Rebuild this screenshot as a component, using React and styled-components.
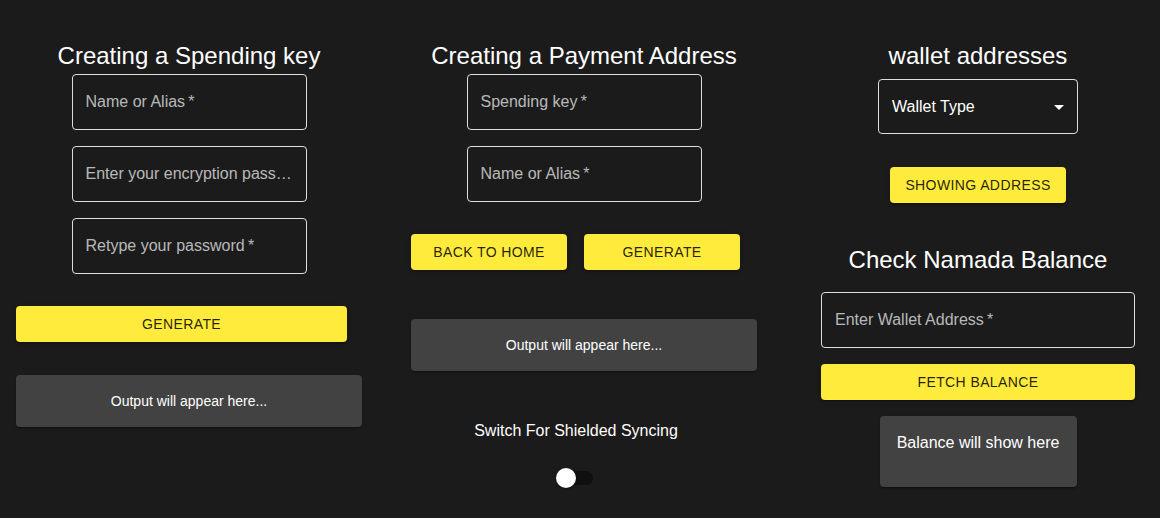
import * as React from 'react';
import styled, { createGlobalStyle } from 'styled-components';

const GlobalStyle = createGlobalStyle`
    html, body {
        margin: 0;
        padding: 0;
        background: #1b1b1b;
        font-family: "Liberation Sans", Arial, sans-serif;
        color: #fff;
    }
    * { box-sizing: border-box; }
`;

const Page = styled.div`
    display: flex;
    align-items: flex-start;
    width: 1160px;
    height: 518px;
    padding: 42px 0 0 16px;
    overflow: hidden;
`;

const Column = styled.div`
    display: flex;
    flex-direction: column;
    align-items: center;
    width: ${props => props.width}px;
    margin-left: ${props => props.gap || 0}px;
`;

const Title = styled.h2`
    margin: ${props => props.top || 0}px 0 0;
    font-size: 24px;
    font-weight: normal;
    line-height: 28px;
    white-space: nowrap;
    color: #fff;
`;

const Field = styled.div`
    display: flex;
    align-items: center;
    width: ${props => props.width || 235}px;
    height: 56px;
    margin-top: ${props => props.top || 0}px;
    padding: 0 13px;
    border: 1px solid rgba(255, 255, 255, 0.85);
    border-radius: 4px;
    font-size: 16px;
    color: rgba(255, 255, 255, 0.7);
    white-space: nowrap;
    overflow: hidden;
`;

const FieldText = styled.span`
    overflow: hidden;
    text-overflow: ellipsis;
`;

const SelectBox = styled(Field)`
    justify-content: space-between;
    height: 55px;
    padding-right: 6px;
    color: #fff;
`;

const Button = styled.button`
    display: block;
    width: ${props => props.width}px;
    height: 36px;
    margin-top: ${props => props.top || 0}px;
    padding: 0 8px;
    border: none;
    border-radius: 4px;
    background: #ffeb3b;
    color: rgba(0, 0, 0, 0.87);
    font-family: "Liberation Sans", Arial, sans-serif;
    font-size: 14px;
    letter-spacing: 0.4px;
    text-transform: uppercase;
    white-space: nowrap;
    box-shadow: 0 3px 1px -2px rgba(0,0,0,0.2), 0 2px 2px 0 rgba(0,0,0,0.14), 0 1px 5px 0 rgba(0,0,0,0.12);
    align-self: ${props => props.align || 'center'};
    cursor: pointer;
`;

const ButtonRow = styled.div`
    display: flex;
    gap: 17px;
    width: 100%;
    margin-top: 32px;
`;

const Output = styled.div`
    width: ${props => props.width ? props.width + 'px' : '100%'};
    margin-top: ${props => props.top || 0}px;
    padding: 16px 16px;
    background: #424242;
    border-radius: 4px;
    font-size: 14px;
    line-height: 20px;
    text-align: center;
    color: #fff;
    box-shadow: 0 2px 1px -1px rgba(0,0,0,0.2), 0 1px 1px 0 rgba(0,0,0,0.14), 0 1px 3px 0 rgba(0,0,0,0.12);
`;

const BalanceBox = styled(Output)`
    height: 71px;
    padding: 16px;
    font-size: 16px;
    line-height: 22px;
`;

const SwitchLabel = styled.div`
    margin: 48px 16px 0 0;
    font-size: 16px;
    line-height: 24px;
    color: #fff;
`;

const SwitchRoot = styled.span`
    position: relative;
    display: inline-flex;
    width: 58px;
    height: 38px;
    margin: 16px 17px 0 0;
    padding: 12px;
`;

const SwitchTrack = styled.span`
    width: 100%;
    height: 100%;
    border-radius: 7px;
    background: #0d0d0d;
    opacity: 0.8;
`;

const SwitchThumb = styled.span`
    position: absolute;
    top: 9px;
    left: 9px;
    width: 20px;
    height: 20px;
    border-radius: 50%;
    background: #fff;
    box-shadow: 0 2px 1px -1px rgba(0,0,0,0.2), 0 1px 1px 0 rgba(0,0,0,0.14), 0 1px 3px 0 rgba(0,0,0,0.12);
`;

function ArrowDrop()
{
    return (
        <svg width="24" height="24" viewBox="0 0 24 24" fill="#fff">
            <path d="M7 10l5 5 5-5z" />
        </svg>
    );
}

const REQ = '\u2009*';

export default function App()
{
    return (
        <Page>
            <GlobalStyle />

            <Column width={346}>
                <Title>Creating a Spending key</Title>
                <Field top={4}><FieldText>Name or Alias{REQ}</FieldText></Field>
                <Field top={16}><FieldText>Enter your encryption password{REQ}</FieldText></Field>
                <Field top={16}><FieldText>Retype your password{REQ}</FieldText></Field>
                <Button width={331} top={32} align="flex-start">Generate</Button>
                <Output top={33}>Output will appear here...</Output>
            </Column>

            <Column width={346} gap={49}>
                <Title>Creating a Payment Address</Title>
                <Field top={4}><FieldText>Spending key{REQ}</FieldText></Field>
                <Field top={16}><FieldText>Name or Alias{REQ}</FieldText></Field>
                <ButtonRow>
                    <Button width={156}>Back to home</Button>
                    <Button width={156}>Generate</Button>
                </ButtonRow>
                <Output top={49}>Output will appear here...</Output>
                <SwitchLabel>Switch For Shielded Syncing</SwitchLabel>
                <SwitchRoot>
                    <SwitchTrack />
                    <SwitchThumb />
                </SwitchRoot>
            </Column>

            <Column width={314} gap={64}>
                <Title>wallet addresses</Title>
                <SelectBox width={200} top={9}>
                    <span>Wallet Type</span>
                    <ArrowDrop />
                </SelectBox>
                <Button width={176} top={33}>Showing address</Button>
                <Title top={43}>Check Namada Balance</Title>
                <Field width={314} top={18}><FieldText>Enter Wallet Address{REQ}</FieldText></Field>
                <Button width={314} top={16}>Fetch balance</Button>
                <BalanceBox width={197} top={16}>Balance will show here</BalanceBox>
            </Column>
        </Page>
    );
}
